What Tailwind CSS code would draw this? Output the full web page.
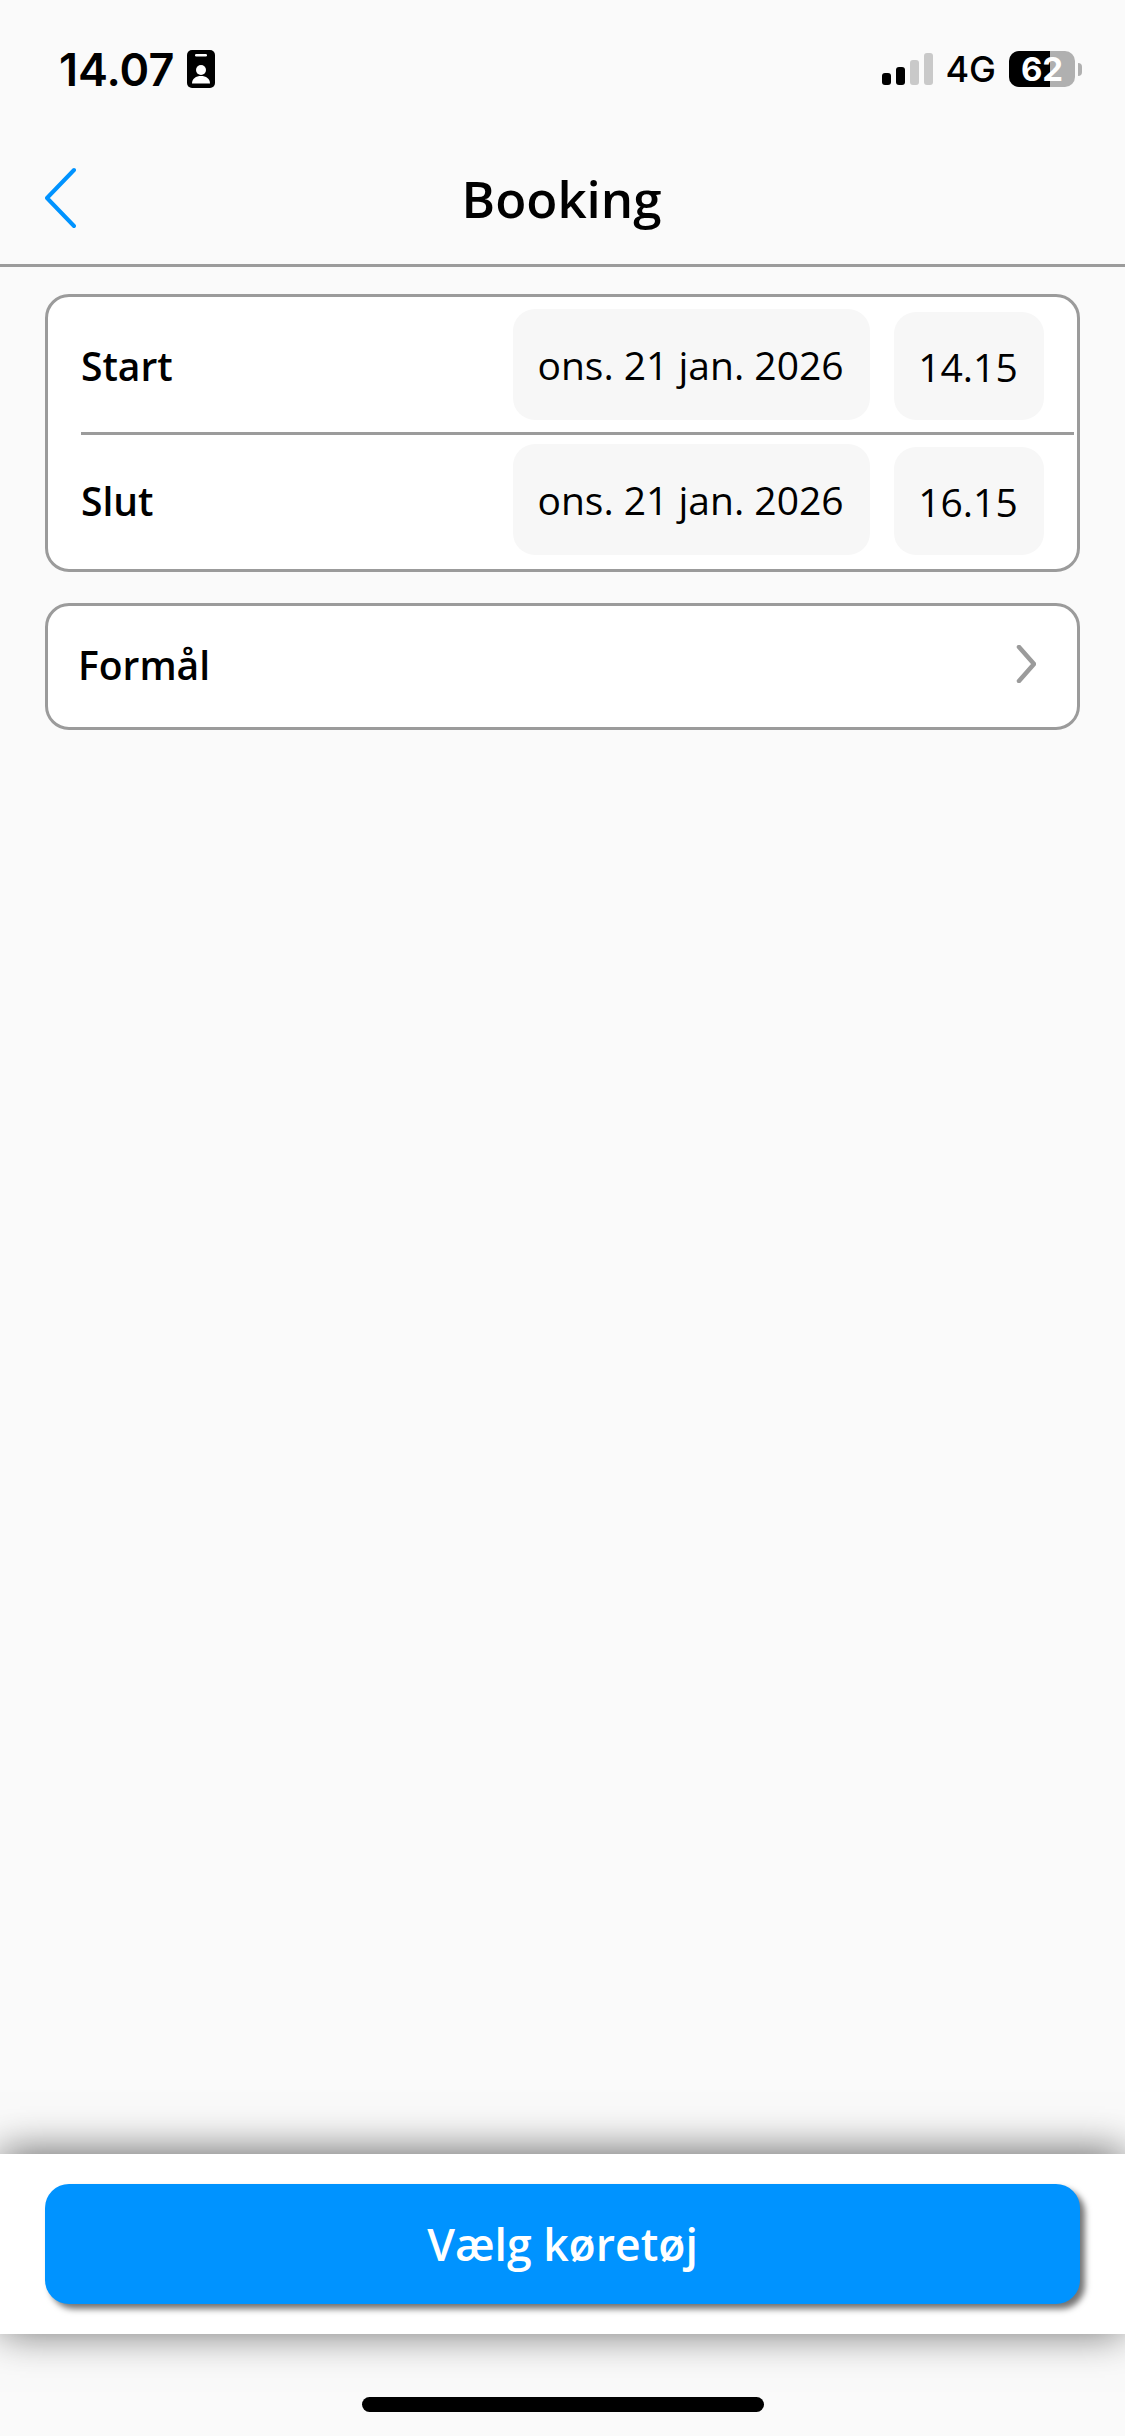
<!DOCTYPE html>
<html lang="da">
<head>
  <meta charset="UTF-8" />
  <meta name="viewport" content="width=device-width, initial-scale=1.0"/>
  <title>Booking</title>
  <script src="https://cdn.jsdelivr.net/npm/@tailwindcss/browser@4"></script>
</head>
<body class="bg-[#fafafa] text-black font-['Open_Sans',sans-serif]">
  <div class="w-[1125px] h-[2436px] flex flex-col overflow-hidden">

    <!-- Status bar -->
    <div class="h-[138px] flex items-center justify-between pl-[59px] pr-[43px] font-['Inter',sans-serif]">
      <div class="flex items-center gap-[13px]">
        <span class="text-[45px] leading-none font-semibold">14.07</span>
        <svg width="28" height="38" viewBox="0 0 28 38" aria-hidden="true">
          <rect width="28" height="38" rx="5" fill="#000"/>
          <rect x="8" y="4" width="12" height="2.5" rx="1.2" fill="#fff"/>
          <circle cx="14" cy="20" r="5" fill="#fff"/>
          <path d="M5 33.5c0-5 4-7.5 9-7.5s9 2.5 9 7.5z" fill="#fff"/>
        </svg>
      </div>
      <div class="flex items-center">
        <div class="flex items-end gap-[5px] h-[32px]">
          <div class="w-[9px] h-[12px] rounded-[3px] bg-black"></div>
          <div class="w-[9px] h-[18px] rounded-[3px] bg-black"></div>
          <div class="w-[9px] h-[25px] rounded-[3px] bg-[#c9c9c9]"></div>
          <div class="w-[9px] h-[32px] rounded-[3px] bg-[#c9c9c9]"></div>
        </div>
        <span class="ml-[12px] text-[36px] leading-none font-medium">4G</span>
        <div class="relative ml-[13px] w-[66px] h-[36px] rounded-[10px] bg-[#b0b0b0]">
          <div class="w-[41px] h-full rounded-l-[10px] bg-black"></div>
          <span class="absolute inset-0 flex items-center justify-center text-[33px] leading-none font-bold text-white">62</span>
        </div>
        <div class="ml-[3px] w-[4px] h-[13px] rounded-r-full bg-[#b0b0b0]"></div>
      </div>
    </div>

    <!-- Header -->
    <header class="h-[129px] grid grid-cols-[1fr_auto_1fr] items-center pb-[6px] border-b-[3px] border-[#9b9b9b]">
      <svg class="ml-[45px]" width="31" height="62" viewBox="0 0 31 62" fill="none" aria-label="Tilbage">
        <path d="M29 3 2 31l27 28" stroke="#0093ff" stroke-width="4" stroke-linecap="round" stroke-linejoin="round"/>
      </svg>
      <h1 class="pr-[2px] text-[51px] leading-none font-semibold">Booking</h1>
      <div></div>
    </header>

    <!-- Content -->
    <main class="flex-1 px-[45px] pt-[27px]">
      <div class="h-[278px] rounded-[24px] border-[3px] border-[#9b9b9b] bg-white">
        <div class="h-[135px] flex items-center px-[33px]">
          <span class="mt-[2px] text-[39px] leading-none font-semibold">Start</span>
          <div class="self-end mb-[12px] ml-auto pr-[2px] w-[357px] h-[111px] rounded-[22px] bg-[#f7f7f7] flex items-center justify-center text-[39px] leading-none">ons. 21 jan. 2026</div>
          <div class="self-end mb-[12px] ml-[24px] pr-[2px] w-[150px] h-[108px] rounded-[22px] bg-[#f7f7f7] flex items-center justify-center text-[39px] leading-none">14.15</div>
        </div>
        <div class="ml-[33px] mr-[3px] h-[3px] bg-[#9b9b9b]"></div>
        <div class="h-[134px] flex items-center px-[33px]">
          <span class="mb-[4px] text-[39px] leading-none font-semibold">Slut</span>
          <div class="self-end mb-[14px] ml-auto pr-[2px] w-[357px] h-[111px] rounded-[22px] bg-[#f7f7f7] flex items-center justify-center text-[39px] leading-none">ons. 21 jan. 2026</div>
          <div class="self-end mb-[14px] ml-[24px] pr-[2px] w-[150px] h-[108px] rounded-[22px] bg-[#f7f7f7] flex items-center justify-center text-[39px] leading-none">16.15</div>
        </div>
      </div>

      <div class="mt-[31px] h-[127px] rounded-[24px] border-[3px] border-[#9b9b9b] bg-white flex items-center justify-between pl-[30px] pr-[41px]">
        <span class="mb-[4px] text-[39px] leading-none font-semibold">Formål</span>
        <svg class="mb-[5px]" width="20" height="38" viewBox="0 0 20 38" fill="none" aria-hidden="true">
          <path d="M3 2l15 17L3 36" stroke="#9b9b9b" stroke-width="4.5" stroke-linecap="round" stroke-linejoin="round"/>
        </svg>
      </div>
    </main>

    <!-- Bottom action bar -->
    <div class="relative h-[180px] bg-white pt-[30px] px-[45px] shadow-[0_-2px_40px_rgba(0,0,0,0.6)]">
      <button class="w-full h-[120px] rounded-[24px] bg-[#0093ff] text-white text-[44.5px] leading-none font-semibold shadow-[5px_5px_6px_rgba(0,0,0,0.55)]">Vælg køretøj</button>
    </div>

    <!-- Home indicator -->
    <div class="h-[102px] flex justify-center pt-[63px]">
      <div class="w-[402px] h-[15px] rounded-full bg-black"></div>
    </div>
  </div>
</body>
</html>
